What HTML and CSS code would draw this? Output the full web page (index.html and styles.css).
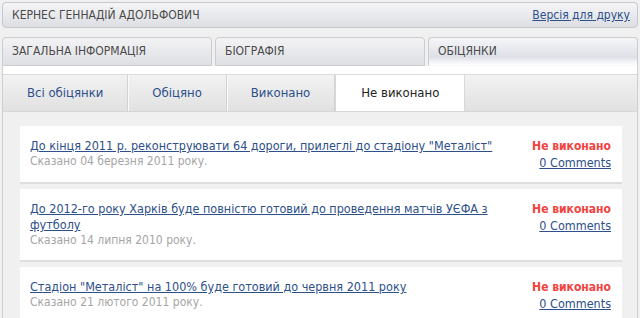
FILE: index.html
```html
<!DOCTYPE html>
<html lang="uk">
<head>
    <meta charset="UTF-8">
    <title>Кернес Геннадій Адольфович — Обіцянки</title>
    <link rel="stylesheet" href="styles.css">
</head>
<body>
    <div class="person-bar">
        <span class="person-name">Кернес Геннадій Адольфович</span>
        <a href="#" class="print-link">Версія для друку</a>
    </div>

    <ul class="main-tabs">
        <li class="main-tab">Загальна інформація</li>
        <li class="main-tab">Біографія</li>
        <li class="main-tab active">Обіцянки</li>
    </ul>

    <div class="panel">
        <ul class="sub-tabs">
            <li class="sub-tab">Всі обіцянки</li>
            <li class="sub-tab">Обіцяно</li>
            <li class="sub-tab">Виконано</li>
            <li class="sub-tab active">Не виконано</li>
        </ul>

        <div class="promise-list">
            <div class="promise">
                <div class="promise-main">
                    <a href="#" class="promise-title">До кінця 2011 р. реконструювати 64 дороги, прилеглі до стадіону "Металіст"</a>
                    <div class="promise-date">Сказано 04 березня 2011 року.</div>
                </div>
                <div class="promise-side">
                    <div class="promise-status">Не виконано</div>
                    <a href="#" class="promise-comments">0 Comments</a>
                </div>
            </div>

            <div class="promise">
                <div class="promise-main">
                    <a href="#" class="promise-title">До 2012-го року Харків буде повністю готовий до проведення матчів УЄФА з футболу</a>
                    <div class="promise-date">Сказано 14 липня 2010 року.</div>
                </div>
                <div class="promise-side">
                    <div class="promise-status">Не виконано</div>
                    <a href="#" class="promise-comments">0 Comments</a>
                </div>
            </div>

            <div class="promise">
                <div class="promise-main">
                    <a href="#" class="promise-title">Стадіон "Металіст" на 100% буде готовий до червня 2011 року</a>
                    <div class="promise-date">Сказано 21 лютого 2011 року.</div>
                </div>
                <div class="promise-side">
                    <div class="promise-status">Не виконано</div>
                    <a href="#" class="promise-comments">0 Comments</a>
                </div>
            </div>
        </div>
    </div>
</body>
</html>
```

FILE: styles.css
```css
body {
    margin: 0;
    padding: 2px 2px 0;
    background-color: #f0f0f0;
    font-family: 'DejaVu Sans Condensed', 'DejaVu Sans', sans-serif;
    font-size: 12px;
    color: #444;
    overflow: hidden;
}

a {
    color: #2d4f8a;
}

.person-bar {
    height: 24px;
    display: flex;
    align-items: center;
    justify-content: space-between;
    padding: 0 7px 0 9px;
    border: 1px solid #c6c7cb;
    border-radius: 4px;
    background: linear-gradient(#f5f5f7, #dcdee3);
}

.person-name {
    text-transform: uppercase;
    color: #4a4a4a;
}

.print-link {
    font-size: 12px;
}

.main-tabs {
    list-style: none;
    margin: 9px 0 0;
    padding: 0;
    display: flex;
    gap: 3px;
}

.main-tab {
    flex: 1;
    height: 27px;
    line-height: 27px;
    padding-left: 9px;
    text-transform: uppercase;
    color: #4a4a4a;
    border: 1px solid #cbccd0;
    border-radius: 4px 4px 0 0;
    background: linear-gradient(#f3f3f5, #dfe0e4);
}

.main-tab.active {
    border-bottom-color: transparent;
    background: linear-gradient(#f6f6f8 0%, #dde0e7 70%, #ffffff 100%);
}

.panel {
    background-color: #fff;
    border-left: 1px solid #cfcfcf;
    border-right: 1px solid #cfcfcf;
    padding-top: 8px;
}

.sub-tabs {
    list-style: none;
    margin: 0;
    padding: 0;
    display: flex;
    height: 36px;
    border-top: 1px solid #dcdcdc;
    border-bottom: 1px solid #d6d6d6;
    background: linear-gradient(#f2f2f2, #e1e1e1);
}

.sub-tab {
    padding: 0 24px;
    line-height: 36px;
    font-size: 13px;
    color: #2d4f8a;
    border-right: 1px solid #d2d2d2;
    box-shadow: 1px 0 0 #fafafa;
}

.sub-tab.active {
    padding: 0 25px;
    color: #222;
    background-color: #fff;
    border-left: 1px solid #d8d8d8;
    border-right: 1px solid #d8d8d8;
    box-shadow: none;
}

.promise-list {
    background-color: #f0f0f0;
    padding: 14px 15px 1px 17px;
}

.promise {
    display: flex;
    justify-content: space-between;
    padding: 12px 11px 12px 10px;
    margin-bottom: 7px;
    background-color: #fff;
    box-shadow: 0 2px 0 #dedede;
}

.promise-main {
    flex: 1;
}

.promise-title {
    font-size: 12.5px;
    line-height: 16px;
}

.promise-date {
    color: #a5a5a5;
    line-height: 15px;
}

.promise-side {
    margin-left: 24px;
    text-align: right;
    white-space: nowrap;
}

.promise-status {
    font-size: 12px;
    line-height: 16px;
    font-weight: bold;
    color: #f2433f;
}

.promise-comments {
    display: inline-block;
    margin-top: 1px;
    font-size: 12.5px;
    line-height: 15px;
}
```
